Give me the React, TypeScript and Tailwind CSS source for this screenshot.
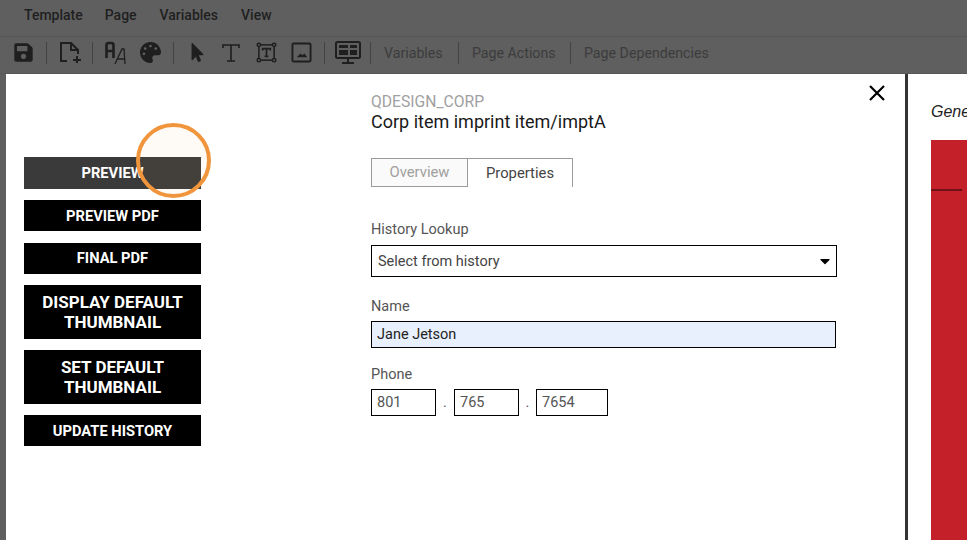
import React from "react";
import { FaSave, FaPalette, FaMousePointer, FaCaretDown } from "react-icons/fa";

const Sep = ({ cls }: { cls: string }) => <div className={`w-px h-[22px] bg-[#434343] shrink-0 ${cls}`} />;

const Btn = ({ children, h, cls = "" }: { children: React.ReactNode; h: string; cls?: string }) => (
  <div className={`w-[177px] ${h} ${cls} flex items-center justify-center text-center text-white font-bold leading-[20px]`}>
    {children}
  </div>
);

export default function App() {
  return (
    <div className="w-[967px] h-[540px] overflow-hidden flex flex-col bg-[#5f5f5f] relative" style={{ fontFamily: "Roboto, 'Liberation Sans', sans-serif" }}>
      <div className="h-[37px] flex items-center pl-6 text-[14px] font-medium text-[#1f1f1f] border-b border-[#565656] shrink-0 pb-[5px]">
        <span>Template</span><span className="ml-[22px]">Page</span><span className="ml-[23px]">Variables</span><span className="ml-[23px]">View</span>
      </div>
      <div className="h-[37px] flex items-center shrink-0 text-[#1f1f1f] border-b border-[#585858] pb-[5px]">
        <FaSave className="ml-[13px] w-[21px] h-[21px]" />
        <Sep cls="ml-[12px]" />
        <svg className="ml-[12px]" width="24" height="24" viewBox="0 0 24 24" fill="none" stroke="#1f1f1f" strokeWidth="2"><path d="M8 20H2V2h10l7 7v4M12 2v7h7M18 15v7M14 19h8" /></svg>
        <Sep cls="ml-[9px]" />
        <svg className="ml-[12px]" width="22" height="24" viewBox="0 0 22 24"><path d="M1.5 17V4q0-2 2-2h3q2 0 2 2v13M1.5 10h7" fill="none" stroke="#1f1f1f" strokeWidth="2.6" /><path d="M10 23L17 8h2l1 15M13 18h7" fill="none" stroke="#1f1f1f" strokeWidth="1.3" /></svg>
        <FaPalette className="ml-[13px] w-[21px] h-[21px]" />
        <Sep cls="ml-[12px]" />
        <FaMousePointer className="ml-[16px] w-[15px] h-[19px]" />
        <svg className="ml-[17px]" width="18" height="20" viewBox="0 0 18 20" fill="none" stroke="#1f1f1f" strokeWidth="1.6"><path d="M1 5V2h16v3M9 2v16M5 18h8" /></svg>
        <svg className="ml-[16px]" width="21" height="21" viewBox="0 0 22 22" fill="none" stroke="#1f1f1f" strokeWidth="1.6"><rect x="3" y="3" width="16" height="16" /><circle cx="3" cy="3" r="1.8" fill="#5f5f5f" /><circle cx="19" cy="3" r="1.8" fill="#5f5f5f" /><circle cx="3" cy="19" r="1.8" fill="#5f5f5f" /><circle cx="19" cy="19" r="1.8" fill="#5f5f5f" /><path d="M7 9V7h8v2M11 7v8M9 15h4" strokeWidth="1.8" /></svg>
        <svg className="ml-[14px]" width="21" height="21" viewBox="0 0 22 22"><rect x="1.5" y="1.5" width="19" height="19" rx="1.5" fill="none" stroke="#1f1f1f" strokeWidth="2" /><path d="M6 16l4-4 2 2 2-2 3 4z" fill="#1f1f1f" /></svg>
        <Sep cls="ml-[12px]" />
        <svg className="ml-[10px]" width="26" height="24" viewBox="0 0 26 24"><rect x="1" y="1" width="24" height="16" rx="1.5" fill="none" stroke="#1f1f1f" strokeWidth="2" /><rect x="4" y="4" width="9" height="3" fill="#1f1f1f" /><rect x="15" y="4" width="7" height="3" fill="#1f1f1f" /><rect x="4" y="9" width="9" height="5" fill="#1f1f1f" /><rect x="15" y="9" width="7" height="5" fill="#1f1f1f" /><path d="M13 17v4M7 22h12" stroke="#1f1f1f" strokeWidth="2" /></svg>
        <Sep cls="ml-[9px]" />
        <span className="ml-[13px] pt-[2px] text-[14.2px] text-[#3c3c3c] w-[60px]">Variables</span>
        <Sep cls="ml-[14px]" />
        <span className="ml-[13px] pt-[2px] text-[14.2px] text-[#3c3c3c] w-[85px]">Page Actions</span>
        <Sep cls="ml-[13px]" />
        <span className="ml-[13px] pt-[2px] text-[14.2px] text-[#3c3c3c]">Page Dependencies</span>
      </div>
      <div className="flex-1 flex pl-[6px]">
        <div className="w-[899px] bg-white flex relative">
          <div className="w-[365px] pl-[18px] pt-[83px] flex flex-col gap-[11px] shrink-0">
            <Btn h="h-[32px]" cls="bg-[#3a3a3a] text-[14.7px]">PREVIEW</Btn>
            <Btn h="h-[31px]" cls="bg-black text-[14.7px]">PREVIEW PDF</Btn>
            <Btn h="h-[31px]" cls="bg-black text-[14.7px] mt-px pb-[2px]">FINAL PDF</Btn>
            <Btn h="h-[54px]" cls="bg-black text-[17px]">DISPLAY DEFAULT<br />THUMBNAIL</Btn>
            <Btn h="h-[54px]" cls="bg-black text-[17px]">SET DEFAULT<br />THUMBNAIL</Btn>
            <Btn h="h-[31px]" cls="bg-black text-[14.7px]">UPDATE HISTORY</Btn>
          </div>
          <div className="pt-[18px] flex-1">
            <div className="text-[15.7px] leading-[19px] text-[#a0a0a0]">QDESIGN_CORP</div>
            <div className="text-[18px] leading-[21px] text-[#1a1a1a]">Corp item imprint item/imptA</div>
            <div className="flex mt-[26px] h-[29px] text-[14.8px]">
              <div className="w-[97px] border border-[#9a9a9a] bg-[#fafafa] text-[#a0a0a0] flex items-center justify-center">Overview</div>
              <div className="w-[105px] border-t border-r border-[#9a9a9a] text-[#444] flex items-center justify-center">Properties</div>
            </div>
            <div className="mt-[33px] text-[14.5px] leading-[20px] text-[#555]">History Lookup</div>
            <div className="mt-[5px] w-[466px] h-[32px] border border-black flex items-center justify-between pl-[6px] pr-[3px] text-[14.5px] text-[#444]">
              <span className="pt-[2px]">Select from history</span>
              <FaCaretDown className="w-[16px] h-[16px] text-black" />
            </div>
            <div className="mt-[20px] text-[14.5px] leading-[20px] text-[#555]">Name</div>
            <div className="mt-[4px] w-[465px] h-[27px] border border-black bg-[#e8f0fe] flex items-center pl-[5px] text-[14.5px] text-[#222]">Jane Jetson</div>
            <div className="mt-[17px] text-[14.5px] leading-[20px] text-[#555]">Phone</div>
            <div className="mt-[4px] flex items-center text-[14.5px] text-[#555]">
              <div className="w-[65px] h-[27px] border border-black flex items-center pl-[5px]">801</div>
              <div className="w-[18px] text-center">.</div>
              <div className="w-[65px] h-[27px] border border-black flex items-center pl-[5px]">765</div>
              <div className="w-[17px] text-center">.</div>
              <div className="w-[72px] h-[27px] border border-black flex items-center pl-[5px]">7654</div>
            </div>
          </div>
          <svg className="absolute left-[862px] top-[10px]" width="18" height="18" viewBox="0 0 18 18" fill="none" stroke="#000" strokeWidth="2.2"><path d="M2 2l14 14M16 2L2 16" /></svg>
        </div>
        <div className="w-[3px] bg-[#333]" />
        <div className="flex-1 bg-white pl-[23px] pt-[28px] overflow-hidden">
          <div className="text-[16px] leading-[20px] italic text-[#222]" style={{ fontFamily: "'Liberation Sans', sans-serif" }}>General</div>
          <div className="mt-[18px] h-[400px] w-[60px] bg-[#c4202a] flex flex-col">
            <div className="mt-[49px] h-[2px] w-[31px] bg-[#6e1218]" />
          </div>
        </div>
      </div>
      <div className="absolute left-[136px] top-[123px] w-[75px] h-[75px] rounded-full border-[4px] border-[#f0953c] bg-[#f39a3d]/5" />
    </div>
  );
}
